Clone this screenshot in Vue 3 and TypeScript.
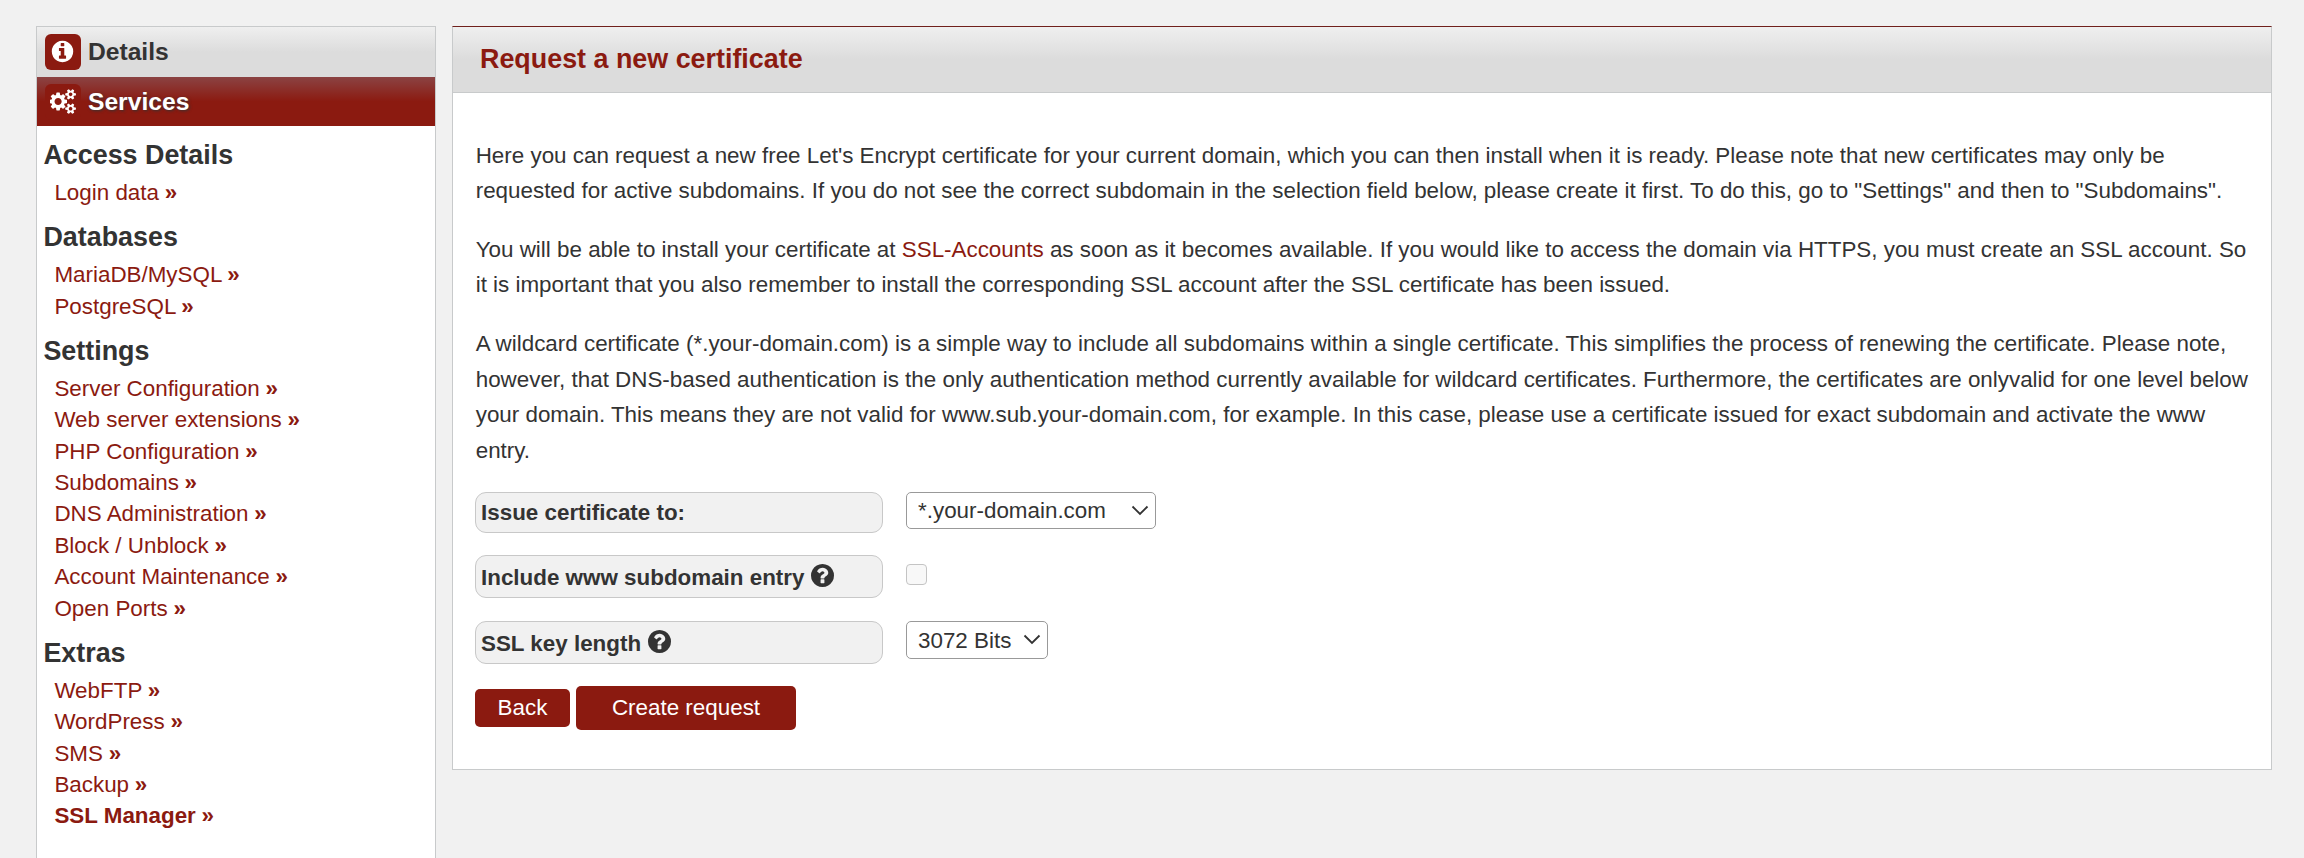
<script setup lang="ts">
import { ref } from 'vue'

interface NavLink {
  label: string
  active?: boolean
}

interface NavGroup {
  title: string
  links: NavLink[]
}

const groups: NavGroup[] = [
  { title: 'Access Details', links: [{ label: 'Login data' }] },
  { title: 'Databases', links: [{ label: 'MariaDB/MySQL' }, { label: 'PostgreSQL' }] },
  {
    title: 'Settings',
    links: [
      { label: 'Server Configuration' },
      { label: 'Web server extensions' },
      { label: 'PHP Configuration' },
      { label: 'Subdomains' },
      { label: 'DNS Administration' },
      { label: 'Block / Unblock' },
      { label: 'Account Maintenance' },
      { label: 'Open Ports' },
    ],
  },
  {
    title: 'Extras',
    links: [
      { label: 'WebFTP' },
      { label: 'WordPress' },
      { label: 'SMS' },
      { label: 'Backup' },
      { label: 'SSL Manager', active: true },
    ],
  },
]

const domain = ref('*.your-domain.com')
const keyLength = ref('3072 Bits')

const infoPath =
  'M1152 1376v-160q0-14-9-23t-23-9h-96v-512q0-14-9-23t-23-9h-320q-14 0-23 9t-9 23v160q0 14 9 23t23 9h96v320h-96q-14 0-23 9t-9 23v160q0 14 9 23t23 9h448q14 0 23-9t9-23zm-128-896v-160q0-14-9-23t-23-9h-192q-14 0-23 9t-9 23v160q0 14 9 23t23 9h192q14 0 23-9t9-23zm640 416q0 209-103 385.5t-279.5 279.5-385.5 103-385.5-103-279.5-279.5-103-385.5 103-385.5 279.5-279.5 385.5-103 385.5 103 279.5 279.5 103 385.5z'
const helpPath =
  'M1024 1376v-192q0-14-9-23t-23-9h-192q-14 0-23 9t-9 23v192q0 14 9 23t23 9h192q14 0 23-9t9-23zm256-672q0-88-55.5-163t-138.5-116-170-41q-243 0-371 213-15 24 8 42l132 100q7 6 19 6 16 0 25-12 53-68 86-92 34-24 86-24 48 0 85.5 26t37.5 59q0 38-20 61t-68 45q-63 28-115.5 86.5t-52.5 125.5v36q0 14 9 23t23 9h192q14 0 23-9t9-23q0-19 21.5-49.5t54.5-49.5q32-18 49-28.5t46-35 44.5-48 28-60.5 12.5-81zm384 192q0 209-103 385.5t-279.5 279.5-385.5 103-385.5-103-279.5-279.5-103-385.5 103-385.5 279.5-279.5 385.5-103 385.5 103 279.5 279.5 103 385.5z'
const cogsPath =
  'M832 896q0-106-75-181t-181-75-181 75-75 181 75 181 181 75 181-75 75-181zm768 512q0-52-38-90t-90-38-90 38-38 90q0 53 37.5 90.5t90.5 37.5 90.5-37.5 37.5-90.5zm0-1024q0-52-38-90t-90-38-90 38-38 90q0 53 37.5 90.5t90.5 37.5 90.5-37.5 37.5-90.5zm-384 421v185q0 10-7 19.5t-16 10.5l-155 24q-11 35-32 76 34 48 90 115 7 11 7 20 0 12-7 19-23 30-82.5 89.5t-78.5 59.5q-11 0-21-7l-115-90q-37 19-77 31-11 108-23 155-7 24-30 24h-186q-11 0-20-7.5t-10-17.5l-23-153q-34-10-75-31l-118 89q-7 7-20 7-11 0-21-8-144-133-144-160 0-9 7-19 10-14 41-53t47-61q-23-44-35-82l-152-24q-10-1-17-9.5t-7-19.5v-185q0-10 7-19.5t16-10.5l155-24q11-35 32-76-34-48-90-115-7-11-7-20 0-12 7-20 22-30 82-89t79-59q11 0 21 7l115 90q34-18 77-32 11-108 23-154 7-24 30-24h186q11 0 20 7.5t10 17.5l23 153q34 10 75 31l118-89q8-7 20-7 11 0 21 8 144 133 144 160 0 8-7 19-12 16-42 54t-45 60q23 48 34 82l152 23q10 2 17 10.5t7 19.5zm640 533v140q0 16-149 31-12 27-30 52 51 113 51 138 0 4-4 7-122 71-124 71-8 0-46-47t-52-68q-20 2-30 2t-30-2q-14 21-52 68t-46 47q-2 0-124-71-4-3-4-7 0-25 51-138-18-25-30-52-149-15-149-31v-140q0-16 149-31 13-29 30-52-51-113-51-138 0-4 4-7 4-2 35-20t59-34 30-16q8 0 46 46.5t52 67.5q20-2 30-2t30 2q51-71 92-112l6-2q4 0 124 70 4 3 4 7 0 25-51 138 17 23 30 52 149 15 149 31zm0-1024v140q0 16-149 31-12 27-30 52 51 113 51 138 0 4-4 7-122 71-124 71-8 0-46-47t-52-68q-20 2-30 2t-30-2q-14 21-52 68t-46 47q-2 0-124-71-4-3-4-7 0-25 51-138-18-25-30-52-149-15-149-31v-140q0-16 149-31 13-29 30-52-51-113-51-138 0-4 4-7 4-2 35-20t59-34 30-16q8 0 46 46.5t52 67.5q20-2 30-2t30 2q51-71 92-112l6-2q4 0 124 70 4 3 4 7 0 25-51 138 17 23 30 52 149 15 149 31z'
</script>

<template>
  <div class="page">
    <nav class="sidebar">
      <div class="tab">
        <span class="tab-icon">
          <svg class="info-svg" viewBox="0 0 1792 1792"><path :d="infoPath" /></svg>
        </span>
        <span>Details</span>
      </div>
      <div class="tab tab-active">
        <span class="tab-icon">
          <svg class="cogs-svg" viewBox="0 0 1856 1792"><path :d="cogsPath" /></svg>
        </span>
        <span>Services</span>
      </div>
      <section v-for="group in groups" :key="group.title" class="group">
        <h3>{{ group.title }}</h3>
        <ul>
          <li v-for="link in group.links" :key="link.label">
            <a :class="{ current: link.active }">{{ link.label }} <b>»</b></a>
          </li>
        </ul>
      </section>
    </nav>

    <main class="panel">
      <header class="panel-head"><h2>Request a new certificate</h2></header>
      <div class="panel-body">
        <p>
          Here you can request a new free Let's Encrypt certificate for your current domain, which you can then install when it is ready. Please note that new certificates may only be<br />
          requested for active subdomains. If you do not see the correct subdomain in the selection field below, please create it first. To do this, go to "Settings" and then to "Subdomains".
        </p>
        <p>
          You will be able to install your certificate at <a>SSL-Accounts</a> as soon as it becomes available. If you would like to access the domain via HTTPS, you must create an SSL account. So<br />
          it is important that you also remember to install the corresponding SSL account after the SSL certificate has been issued.
        </p>
        <p>
          A wildcard certificate (*.your-domain.com) is a simple way to include all subdomains within a single certificate. This simplifies the process of renewing the certificate. Please note,<br />
          however, that DNS-based authentication is the only authentication method currently available for wildcard certificates. Furthermore, the certificates are onlyvalid for one level below<br />
          your domain. This means they are not valid for www.sub.your-domain.com, for example. In this case, please use a certificate issued for exact subdomain and activate the www<br />
          entry.
        </p>

        <form class="form" @submit.prevent>
          <div class="row">
            <label class="label label-short">Issue certificate to:</label>
            <div class="select select-domain">
              <select v-model="domain"><option>*.your-domain.com</option></select>
              <svg class="chevron" viewBox="0 0 18 11"><path d="M1.5 1.5 9 9l7.5-7.5" /></svg>
            </div>
          </div>
          <div class="row">
            <label class="label">
              <span>Include www subdomain entry</span>
              <svg class="help" viewBox="128 128 1536 1536"><path :d="helpPath" /></svg>
            </label>
            <input class="checkbox" type="checkbox" disabled />
          </div>
          <div class="row">
            <label class="label">
              <span>SSL key length</span>
              <svg class="help" viewBox="128 128 1536 1536"><path :d="helpPath" /></svg>
            </label>
            <div class="select select-bits">
              <select v-model="keyLength"><option>3072 Bits</option></select>
              <svg class="chevron" viewBox="0 0 18 11"><path d="M1.5 1.5 9 9l7.5-7.5" /></svg>
            </div>
          </div>
          <div class="actions">
            <button type="button" class="btn btn-back">Back</button>
            <button type="submit" class="btn btn-create">Create request</button>
          </div>
        </form>
      </div>
    </main>
  </div>
</template>

<style>
body {
  background: #f1f1f1;
}
</style>

<style scoped>
.page {
  box-sizing: border-box;
  display: flex;
  align-items: flex-start;
  gap: 16px;
  height: 858px;
  padding: 26px 32px 0 36px;
  overflow: hidden;
  background: #f1f1f1;
  color: #333;
  font-family: "Liberation Sans", Arial, sans-serif;
  font-size: 22.4px;
}

.page * {
  box-sizing: border-box;
}

a {
  color: #8b1a10;
  text-decoration: none;
}

.sidebar {
  flex: none;
  width: 400px;
  height: 860px;
  border: 1px solid #c8cacb;
  background: #fff;
}

.tab {
  display: flex;
  align-items: center;
  gap: 7px;
  height: 50px;
  padding: 0 8px;
  background: linear-gradient(#efefef, #dcdcdc 50%);
  font-size: 24.64px;
  font-weight: bold;
}

.tab-active {
  height: 49px;
  background: linear-gradient(#8b4343, #8b1a10 50%);
  color: #fff;
  text-shadow: 1px 1px 3px #333;
}

.tab-icon {
  display: flex;
  align-items: center;
  justify-content: center;
  width: 36px;
  height: 36px;
  border-radius: 6px;
  background: #8b1a10;
}

.tab-icon svg {
  height: 25px;
  fill: #fff;
}

.info-svg {
  width: 25px;
  margin: 0 1px 1px 0;
}

.cogs-svg {
  width: 26px;
}

.group h3 {
  margin: 11px 0 2.4px;
  padding-left: 6.4px;
  font-size: 26.88px;
  line-height: 37.6px;
}

.group ul {
  margin: 0;
  padding: 0 0 0 17.4px;
  list-style: none;
}

.group li {
  line-height: 31.36px;
}

.group b {
  margin-left: -0.5px;
}

.current {
  font-weight: bold;
}

.panel {
  flex: 1;
  height: 744px;
  border: 1px solid #c8cacb;
  border-top-color: #70201c;
  background: #fff;
}

.panel-head {
  height: 66px;
  padding-left: 27px;
  border-bottom: 1px solid #c8cacb;
  background: linear-gradient(#efefef, #dcdcdc 50%);
}

.panel-head h2 {
  margin: 0;
  color: #8b1a10;
  font-size: 26.88px;
  line-height: 65px;
}

.panel-body {
  padding: 44.5px 0 0 22px;
}

.panel-body p {
  margin: 0 0 22.4px;
  padding-left: 0.7px;
  line-height: 35.84px;
  white-space: nowrap;
}

.form {
  padding-top: 1px;
}

.row {
  display: flex;
  align-items: flex-start;
  gap: 23px;
  margin-bottom: 23px;
}

.row:first-child {
  margin-bottom: 22px;
}

.label {
  display: flex;
  align-items: center;
  gap: 7px;
  width: 408px;
  height: 43px;
  padding: 2px 0 0 5px;
  border: 1px solid #c8c8c8;
  border-radius: 11px;
  background: #f1f1f1;
  font-weight: bold;
}

.label-short {
  height: 41px;
  padding-top: 0;
}

.help {
  width: 23px;
  height: 23px;
  margin-top: -4px;
  fill: #333;
}

.select {
  position: relative;
}

.select select {
  width: 100%;
  height: 100%;
  padding: 0 0 0 11px;
  border: 1px solid #999;
  border-radius: 5px;
  background: #fff;
  color: #333;
  font: inherit;
  appearance: none;
}

.select-domain {
  width: 250px;
  height: 37px;
}

.select-bits {
  width: 142px;
  height: 38px;
}

.chevron {
  position: absolute;
  top: 13px;
  right: 7px;
  width: 18px;
  height: 11px;
  fill: none;
  stroke: #333;
  stroke-width: 1.8;
}

.checkbox {
  width: 21px;
  height: 21px;
  margin: 9px 0 0;
  border: 1px solid #c4c4c4;
  border-radius: 4px;
  background: #f8f8f8;
  appearance: none;
}

.actions {
  display: flex;
  align-items: center;
  gap: 6px;
  margin-top: -1px;
}

.btn {
  padding: 0;
  border: 0;
  border-radius: 5px;
  background: #8b1a10;
  color: #fff;
  font: inherit;
}

.btn-back {
  width: 95px;
  height: 38px;
}

.btn-create {
  width: 220px;
  height: 44px;
}
</style>
